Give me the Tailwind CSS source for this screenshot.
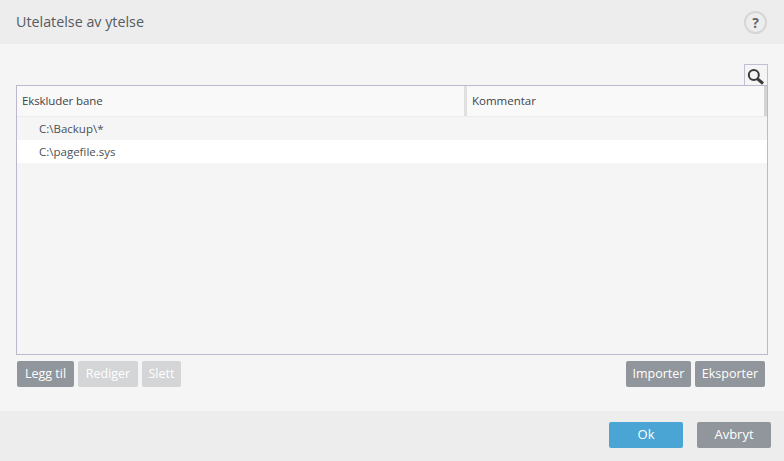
<!DOCTYPE html>
<html lang="en">
<head>
<meta charset="UTF-8">
<title>Utelatelse av ytelse</title>
<script src="https://cdn.jsdelivr.net/npm/@tailwindcss/browser@4"></script>
</head>
<body class="w-[784px] h-[461px] overflow-hidden flex flex-col bg-[#f5f5f5] font-['Open_Sans','Noto_Sans',sans-serif] text-[#4a4f55]">

<header class="h-[44px] shrink-0 bg-[#ededed] flex items-center justify-between pl-[16px] pr-[17px]">
  <h1 class="text-[14.3px] text-[#555b61]">Utelatelse av ytelse</h1>
  <div class="w-[23px] h-[23px] mt-px rounded-full border-2 border-[#d6d6d6] flex items-center justify-center text-[14px] font-bold text-[#666]">?</div>
</header>

<main class="flex-1 flex flex-col px-[16px] pt-[20px]">
  <div class="flex justify-end">
    <div class="w-[24px] h-[22px] -mb-px border border-b-0 border-[#c4bfd2] bg-[#f5f5f5] flex items-center justify-center">
      <svg width="18" height="18" viewBox="0 0 18 18" fill="none">
        <circle cx="6.8" cy="8" r="5" stroke="#3a3a3a" stroke-width="2"/>
        <path d="M10.5 11.8l5.5 4.7" stroke="#3a3a3a" stroke-width="3"/>
      </svg>
    </div>
  </div>
  <div class="h-[270px] border border-[#bdb8cc] flex flex-col text-[11.5px]">
    <div class="h-[31px] shrink-0 bg-[#f9f9f9] border-b border-[#ececec] flex">
      <div class="w-[442px] box-content pl-[5px] flex items-center border-r-[3px] border-[#e0e0e0] text-[#3f444a] tracking-[-0.1px]">Ekskluder bane</div>
      <div class="flex-1 pl-[5px] flex items-center border-r-[3px] border-[#d4d4d4] text-[#3f444a]">Kommentar</div>
    </div>
    <div class="h-[23px] flex items-center pl-[22px]">C:\Backup\*</div>
    <div class="h-[23px] flex items-center pl-[22px] bg-white">C:\pagefile.sys</div>
  </div>
  <div class="mt-[6px] flex justify-between pl-px pr-[3px] text-[12.5px] text-white">
    <div class="flex gap-[4px]">
      <button class="h-[26px] w-[57px] rounded-[2px] bg-[#90969b]">Legg til</button>
      <button class="h-[26px] w-[60px] rounded-[2px] bg-[#d4d5d7]">Rediger</button>
      <button class="h-[26px] w-[39px] rounded-[2px] bg-[#d4d5d7]">Slett</button>
    </div>
    <div class="flex gap-[4px]">
      <button class="h-[26px] w-[65px] rounded-[2px] bg-[#90969b]">Importer</button>
      <button class="h-[26px] w-[70px] rounded-[2px] bg-[#90969b]">Eksporter</button>
    </div>
  </div>
</main>

<footer class="h-[50px] shrink-0 bg-[#ededed] flex items-start justify-end gap-[14px] pt-[11px] pr-[13px] text-[13px] text-white">
  <button class="h-[26px] w-[74px] rounded-[2px] bg-[#4aa5d4]">Ok</button>
  <button class="h-[26px] w-[74px] rounded-[2px] bg-[#90969b]">Avbryt</button>
</footer>

</body>
</html>
